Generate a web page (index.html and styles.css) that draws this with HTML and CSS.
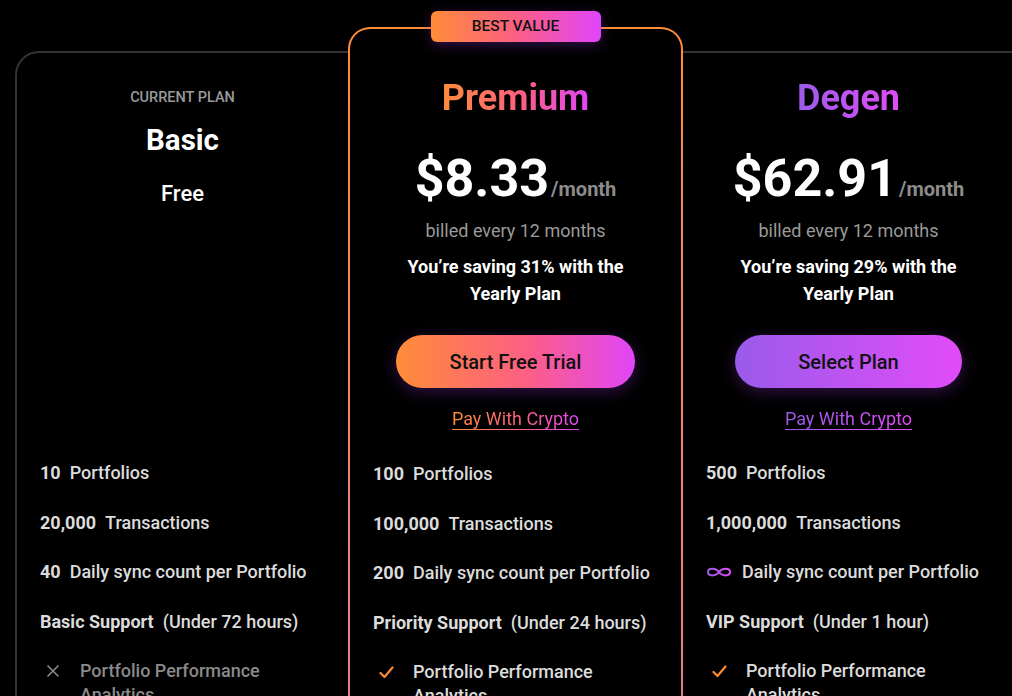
FILE: index.html
```html
<!DOCTYPE html>
<html lang="en">
<head>
<meta charset="utf-8">
<title>Plans</title>
<link rel="stylesheet" href="styles.css">
</head>
<body>
<div class="plans">
  <section class="col basic">
    <div class="head head-basic">
      <div class="current">CURRENT PLAN</div>
      <h2 class="name-basic">Basic</h2>
      <div class="free">Free</div>
    </div>
    <ul class="features">
      <li><b class="num">10</b>Portfolios</li>
      <li><b class="num">20,000</b>Transactions</li>
      <li><b class="num">40</b>Daily sync count per Portfolio</li>
      <li><b class="num">Basic Support</b>(Under 72 hours)</li>
      <li class="icon-row off">
        <span class="ico"><svg width="14" height="14" viewBox="0 0 14 14"><path d="M1.5 1.5 L12.5 12.5 M12.5 1.5 L1.5 12.5" stroke="#8a8a8a" stroke-width="1.6" fill="none"/></svg></span>
        <span>Portfolio Performance Analytics</span>
      </li>
    </ul>
  </section>

  <section class="col premium">
    <div class="badge">BEST VALUE</div>
    <div class="head head-premium">
      <h2 class="title grad-orange">Premium</h2>
      <div class="price"><span class="amount">$8.33</span><span class="per">/month</span></div>
      <div class="billed">billed every 12 months</div>
      <p class="saving">You’re saving 31% with the<br>Yearly Plan</p>
      <button class="btn btn-orange btn-trial">Start Free Trial</button>
      <a class="crypto crypto-orange" href="#"><span class="grad-orange">Pay With Crypto</span></a>
    </div>
    <ul class="features">
      <li><b class="num">100</b>Portfolios</li>
      <li><b class="num">100,000</b>Transactions</li>
      <li><b class="num">200</b>Daily sync count per Portfolio</li>
      <li><b class="num">Priority Support</b>(Under 24 hours)</li>
      <li class="icon-row">
        <span class="ico"><svg width="15" height="13" viewBox="0 0 15 13"><path d="M1.5 7 L5.5 11 L13.5 1.5" stroke="#ff8a34" stroke-width="2.2" fill="none" stroke-linecap="round" stroke-linejoin="round"/></svg></span>
        <span>Portfolio Performance Analytics</span>
      </li>
    </ul>
  </section>

  <section class="col degen">
    <div class="head">
      <h2 class="title grad-purple">Degen</h2>
      <div class="price"><span class="amount">$62.91</span><span class="per">/month</span></div>
      <div class="billed">billed every 12 months</div>
      <p class="saving">You’re saving 29% with the<br>Yearly Plan</p>
      <button class="btn btn-purple btn-select">Select Plan</button>
      <a class="crypto crypto-purple" href="#"><span class="grad-purple">Pay With Crypto</span></a>
    </div>
    <ul class="features">
      <li><b class="num">500</b>Portfolios</li>
      <li><b class="num">1,000,000</b>Transactions</li>
      <li class="inf-row">
        <svg class="inf" width="26" height="12" viewBox="0 0 26 12">
          <defs><linearGradient id="ig" x1="0" y1="0" x2="1" y2="0"><stop offset="0" stop-color="#9f5cf0"/><stop offset="1" stop-color="#e24cf8"/></linearGradient></defs>
          <path d="M13 6 C10 1.5 2 1.5 2 6 C2 10.5 10 10.5 13 6 C16 1.5 24 1.5 24 6 C24 10.5 16 10.5 13 6 Z" stroke="url(#ig)" stroke-width="2" fill="none"/>
        </svg>Daily sync count per Portfolio</li>
      <li><b class="num">VIP Support</b>(Under 1 hour)</li>
      <li class="icon-row">
        <span class="ico"><svg width="15" height="13" viewBox="0 0 15 13"><path d="M1.5 7 L5.5 11 L13.5 1.5" stroke="#ff8a34" stroke-width="2.2" fill="none" stroke-linecap="round" stroke-linejoin="round"/></svg></span>
        <span>Portfolio Performance Analytics</span>
      </li>
    </ul>
  </section>
</div>
</body>
</html>
```

FILE: styles.css
```css
* { box-sizing: border-box; }

html, body {
  margin: 0;
  background: #000;
  height: 696px;
  overflow: hidden;
  font-family: Roboto, "Liberation Sans", Arial, sans-serif;
  color: #fff;
}

.plans {
  margin: 51px 0 0 15px;
  width: 1030px;
  border: 2px solid #333;
  border-radius: 24px;
  display: grid;
  grid-template-columns: 331px 335px 331px;
  align-items: start;
}

.col {
  padding: 0 23px 40px;
}

.premium {
  position: relative;
  margin-top: -26px;
  border: 2px solid transparent;
  border-radius: 22px;
  background:
    linear-gradient(#000, #000) padding-box,
    linear-gradient(180deg, #ff8c38 0%, #f3846a 60%, #e47a90 100%) border-box;
}

.badge {
  position: absolute;
  top: -18px;
  left: 50%;
  transform: translateX(-50%);
  width: 170px;
  height: 31px;
  border-radius: 6px;
  background: linear-gradient(90deg, #ff8c38 0%, #fc5f84 50%, #e045fa 100%);
  color: #111;
  font-size: 15.5px;
  font-weight: 500;
  line-height: 31px;
  text-align: center;
  box-shadow: 0 3px 12px rgba(150, 50, 220, 0.35);
}

.head {
  height: 408px;
  padding-top: 23px;
  display: flex;
  flex-direction: column;
  align-items: center;
  text-align: center;
}

.head-premium {
  height: 433px;
  padding-top: 47px;
}

.head-basic {
  padding-top: 35px;
}

.current {
  font-size: 14.5px;
  font-weight: 500;
  line-height: 20px;
  color: #9a9a9a;
}

.name-basic {
  margin: 14px 0 0;
  font-size: 29.5px;
  font-weight: 700;
  line-height: 36px;
}

.free {
  margin-top: 22px;
  font-size: 22px;
  font-weight: 500;
  line-height: 28px;
}

.title {
  margin: 0;
  font-size: 36px;
  font-weight: 700;
  line-height: 44px;
}

.grad-orange {
  background: linear-gradient(90deg, #ff8c38 0%, #fc5f84 55%, #e045fa 100%);
  -webkit-background-clip: text;
  background-clip: text;
  color: transparent;
}

.grad-purple {
  background: linear-gradient(90deg, #9a5bea 0%, #e24cf8 100%);
  -webkit-background-clip: text;
  background-clip: text;
  color: transparent;
}

.price {
  margin-top: 35px;
  line-height: 48px;
  white-space: nowrap;
}

.amount {
  font-size: 52px;
  font-weight: 700;
  color: #fff;
}

.per {
  margin-left: 2px;
  font-size: 20px;
  font-weight: 700;
  color: #8c8c8c;
}

.billed {
  margin-top: 4px;
  font-size: 18px;
  line-height: 24px;
  color: #9a9a9a;
}

.saving {
  margin: 10px 0 0;
  font-size: 18px;
  font-weight: 700;
  line-height: 27px;
  color: #fff;
}

.btn {
  margin-top: 28px;
  height: 53px;
  border: 0;
  border-radius: 27px;
  font-family: inherit;
  font-size: 20px;
  font-weight: 500;
  color: #111;
  cursor: pointer;
}

.btn-orange {
  background: linear-gradient(90deg, #ff8c38 0%, #fc5f84 55%, #e045fa 100%);
  box-shadow: 0 4px 16px rgba(140, 50, 200, 0.35);
}

.btn-purple {
  background: linear-gradient(90deg, #9a5bea 0%, #e24cf8 100%);
  box-shadow: 0 4px 16px rgba(140, 50, 200, 0.35);
}

.btn-trial { width: 239px; }
.btn-select { width: 227px; }

.crypto {
  position: relative;
  margin-top: 19px;
  font-size: 18px;
  line-height: 24px;
  text-decoration: none;
}

.crypto::after {
  content: "";
  position: absolute;
  left: 0;
  right: 0;
  bottom: 1px;
  height: 1px;
}

.crypto-orange::after {
  background: linear-gradient(90deg, #ff8c38 0%, #fc5f84 55%, #e045fa 100%);
}

.crypto-purple::after {
  background: linear-gradient(90deg, #9a5bea 0%, #e24cf8 100%);
}

.features {
  list-style: none;
  margin: 0;
  padding: 0;
  display: flex;
  flex-direction: column;
  gap: 25.5px;
}

.features li {
  font-size: 18px;
  font-weight: 500;
  line-height: 24px;
  color: #dcdcdc;
}

.num {
  font-weight: 700;
  margin-right: 9px;
}

.inf-row {
  display: flex;
  align-items: center;
  gap: 10px;
}

.inf {
  flex: none;
}

.icon-row {
  display: flex;
  align-items: flex-start;
}

.icon-row .ico {
  flex: none;
  width: 40px;
  height: 24px;
  display: flex;
  align-items: center;
  padding-left: 6px;
}

.icon-row.off {
  color: #8a8a8a;
}
```
